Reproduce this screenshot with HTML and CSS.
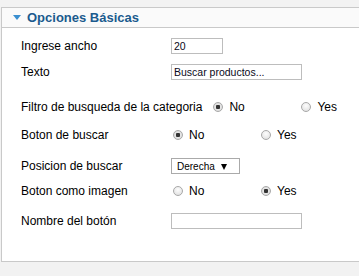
FILE: index.html
```html
<!DOCTYPE html>
<html lang="es">

<head>
    <meta charset="UTF-8">
    <meta name="viewport" content="width=device-width, initial-scale=1.0">
    <title>Opciones Básicas</title>
    <link rel="stylesheet" href="styles.css">
</head>

<body>
    <div class="panel">
        <h3 class="panel-title"><span class="toggle"></span>Opciones Básicas</h3>
        <div class="panel-body">
            <div class="row">
                <label for="ancho">Ingrese ancho</label>
                <input type="text" id="ancho" class="short" value="20">
            </div>
            <div class="row mt-10">
                <label for="texto">Texto</label>
                <input type="text" id="texto" class="long" value="Buscar productos...">
            </div>
            <div class="row mt-19">
                <label>Filtro de busqueda de la categoria</label>
                <span class="option"><input type="radio" name="filtro" id="filtro-no" checked><label for="filtro-no">No</label></span>
                <span class="option"><input type="radio" name="filtro" id="filtro-yes"><label for="filtro-yes">Yes</label></span>
            </div>
            <div class="row mt-12">
                <label>Boton de buscar</label>
                <span class="option"><input type="radio" name="boton" id="boton-no" checked><label for="boton-no">No</label></span>
                <span class="option"><input type="radio" name="boton" id="boton-yes"><label for="boton-yes">Yes</label></span>
            </div>
            <div class="row mt-15">
                <label for="posicion">Posicion de buscar</label>
                <span class="select-wrap">
                    <select id="posicion">
                        <option>Derecha</option>
                        <option>Izquierda</option>
                    </select>
                    <span class="caret"></span>
                </span>
            </div>
            <div class="row mt-9">
                <label>Boton como imagen</label>
                <span class="option"><input type="radio" name="imagen" id="imagen-no"><label for="imagen-no">No</label></span>
                <span class="option"><input type="radio" name="imagen" id="imagen-yes" checked><label for="imagen-yes">Yes</label></span>
            </div>
            <div class="row mt-14">
                <label for="nombre">Nombre del botón</label>
                <input type="text" id="nombre" class="long">
            </div>
        </div>
    </div>
</body>

</html>
```

FILE: styles.css
```css
* {
    margin: 0;
    padding: 0;
    box-sizing: border-box;
}

body {
    background: #f2f2f2;
    font-family: 'Liberation Sans', Arial, sans-serif;
    overflow: hidden;
}

/* panel runs off the right edge, so no right border */
.panel {
    width: 358px;
    margin: 7px 0 0 1px;
    border: 1px solid #c9c9c9;
    border-right: none;
    background: #fff;
}

.panel-title {
    display: flex;
    align-items: center;
    height: 20px;
    padding-left: 11px;
    background: #fafafa;
    border-bottom: 1px solid #c9c9c9;
    font-size: 13px;
    font-weight: bold;
    color: #1b5b8e;
}

.toggle {
    width: 0;
    height: 0;
    margin-right: 6px;
    border-left: 4px solid transparent;
    border-right: 4px solid transparent;
    border-top: 5px solid #3a8fd0;
}

.panel-body {
    height: 233px;
    padding: 10px 0 0 19px;
}

.row {
    display: flex;
    align-items: center;
    height: 16px;
    font-size: 12px;
    color: #000;
    white-space: nowrap;
}

.row > label {
    flex-shrink: 0;
    min-width: 150px;
    padding-right: 9px;
}

.mt-9 { margin-top: 9px; }
.mt-10 { margin-top: 10px; }
.mt-12 { margin-top: 12px; }
.mt-14 { margin-top: 14px; }
.mt-15 { margin-top: 15px; }
.mt-19 { margin-top: 19px; }

input[type=text] {
    height: 16px;
    padding: 0 2px;
    border: 1px solid #bdbdbd;
    font-family: 'Liberation Sans', Arial, sans-serif;
    font-size: 10.5px;
    color: #0a0a20;
    outline: none;
}

.short {
    width: 52px;
}

.long {
    width: 131px;
}

.option {
    display: inline-flex;
    flex-shrink: 0;
    align-items: center;
    width: 88px;
}

.option:last-child {
    width: auto;
}

.option label {
    margin-left: 6px;
}

input[type=radio] {
    appearance: none;
    -webkit-appearance: none;
    flex-shrink: 0;
    width: 10px;
    height: 10px;
    margin-left: 2px;
    border: 1px solid #a8a8a8;
    border-radius: 50%;
    background: radial-gradient(circle at 50% 35%, #fdfdfd, #dcdcdc);
}

input[type=radio]:checked {
    background: radial-gradient(circle, #333 0, #333 2px, #e6e6e6 2.5px, #d6d6d6 5px);
}

.select-wrap {
    position: relative;
    display: inline-block;
}

select {
    appearance: none;
    -webkit-appearance: none;
    width: 69px;
    height: 16px;
    padding: 0 0 0 5px;
    border: 1px solid #aaa;
    border-radius: 0;
    background: #fff;
    font-family: 'Liberation Sans', Arial, sans-serif;
    font-size: 10px;
    color: #000;
    outline: none;
}

.caret {
    position: absolute;
    top: 6px;
    right: 13px;
    width: 0;
    height: 0;
    border-left: 3px solid transparent;
    border-right: 3px solid transparent;
    border-top: 6px solid #000;
    pointer-events: none;
}
```
